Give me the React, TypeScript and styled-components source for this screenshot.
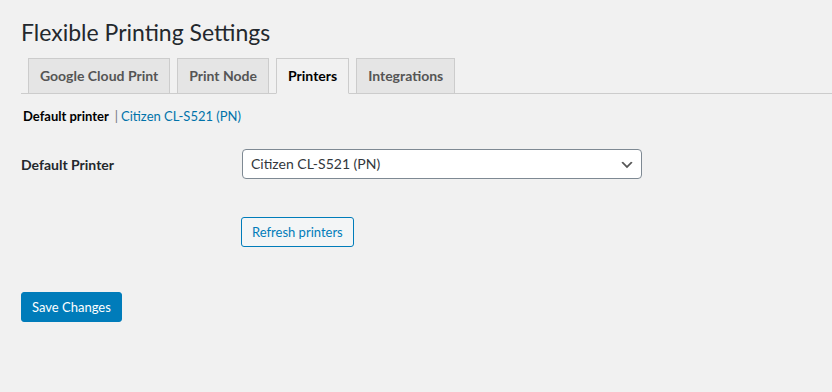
import styled, { createGlobalStyle } from 'styled-components';

const GlobalStyle = createGlobalStyle`
  html, body {
    margin: 0;
    padding: 0;
    background: #f1f1f1;
  }
  body {
    font-family: Lato, "Liberation Sans", sans-serif;
    font-size: 13px;
    color: #23282d;
  }
`

const Wrap = styled.div`
  padding: 0 0 0 21px;
  width: 832px;
  height: 392px;
  box-sizing: border-box;
  overflow: hidden;
`

const Title = styled.h1`
  margin: 0;
  padding: 17px 0 0;
  font-size: 23px;
  font-weight: 400;
  line-height: 30px;
  color: #23282d;
`

const TabBar = styled.nav`
  display: flex;
  align-items: flex-end;
  margin-top: 11px;
  border-bottom: 1px solid #ccc;
  height: 35px;
`

const Tab = styled.a<{ $active?: boolean }>`
  display: block;
  box-sizing: border-box;
  height: ${p => (p.$active ? '36px' : '35px')};
  margin-left: 7px;
  margin-bottom: ${p => (p.$active ? '-1px' : '0')};
  padding: 0 11px;
  border: 1px solid #ccc;
  border-bottom: ${p => (p.$active ? '1px solid #f1f1f1' : 'none')};
  background: ${p => (p.$active ? '#f1f1f1' : '#e5e5e5')};
  color: ${p => (p.$active ? '#000' : '#555')};
  font-size: 14px;
  font-weight: 700;
  line-height: 34px;
  text-decoration: none;
  white-space: nowrap;
`

const SubNav = styled.div`
  display: flex;
  align-items: center;
  gap: 6px;
  margin: 13px 0 0 2px;
  font-size: 13px;
  line-height: 18px;
`

const SubCurrent = styled.span`
  font-weight: 700;
  color: #000;
`

const SubLink = styled.a`
  color: #0073aa;
  text-decoration: none;
`

const Sep = styled.span`
  color: #72777c;
  margin-right: -3px;
`

const FormRow = styled.div`
  display: flex;
  align-items: center;
  margin-top: 24px;
`

const Label = styled.label`
  width: 221px;
  font-size: 14px;
  font-weight: 700;
  color: #23282d;
`

const SelectBox = styled.div`
  position: relative;
  box-sizing: border-box;
  width: 400px;
  height: 30px;
  border: 1px solid #7e8993;
  border-radius: 4px;
  background: #fff;
  padding: 0 24px 0 8px;
  font-size: 14px;
  line-height: 28px;
  color: #32373c;
`

const Chevron = styled.svg`
  position: absolute;
  right: 6px;
  top: 7px;
`

const RefreshRow = styled.div`
  margin: 38px 0 0 220px;
`

const SecondaryButton = styled.button`
  box-sizing: border-box;
  height: 30px;
  padding: 0 10px;
  border: 1px solid #007cba;
  border-radius: 3px;
  background: #f3f5f6;
  color: #007cba;
  font-family: inherit;
  font-size: 13px;
  line-height: 28px;
`

const PrimaryButton = styled.button`
  display: block;
  box-sizing: border-box;
  height: 30px;
  margin-top: 45px;
  padding: 0 10px;
  border: 1px solid #007cba;
  border-radius: 3px;
  background: #007cba;
  color: #fff;
  font-family: inherit;
  font-size: 13px;
  line-height: 28px;
`

const tabs = ['Google Cloud Print', 'Print Node', 'Printers', 'Integrations'];

export default function App() {
  return (
    <>
      <GlobalStyle />
      <Wrap>
        <Title>Flexible Printing Settings</Title>
        <TabBar>
          {tabs.map(t => (
            <Tab key={t} $active={t === 'Printers'}>{t}</Tab>
          ))}
        </TabBar>
        <SubNav>
          <SubCurrent>Default printer</SubCurrent>
          <Sep>|</Sep>
          <SubLink>Citizen CL-S521 (PN)</SubLink>
        </SubNav>
        <FormRow>
          <Label>Default Printer</Label>
          <SelectBox>
            Citizen CL-S521 (PN)
            <Chevron width="16" height="16" viewBox="0 0 20 20">
              <path d="M5 6l5 5 5-5 2 1-7 7-7-7 2-1z" fill="#555" />
            </Chevron>
          </SelectBox>
        </FormRow>
        <RefreshRow>
          <SecondaryButton>Refresh printers</SecondaryButton>
        </RefreshRow>
        <PrimaryButton>Save Changes</PrimaryButton>
      </Wrap>
    </>
  );
}
